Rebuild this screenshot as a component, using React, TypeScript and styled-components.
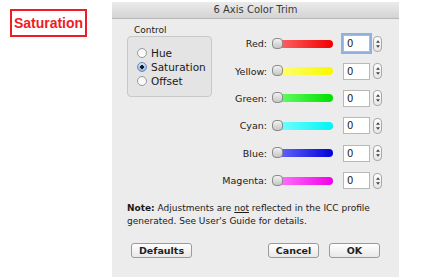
import React, { useState } from 'react';
import styled, { createGlobalStyle } from 'styled-components';

const GlobalStyle = createGlobalStyle`
  html, body {
    margin: 0;
    padding: 0;
    background: #ffffff;
  }
  body {
    font-family: "DejaVu Sans", "Noto Sans", sans-serif;
    font-size: 10px;
    color: #1a1a1a;
  }
`;

const channels = [
  { name: 'Red', from: '#ff7070', to: '#f00000' },
  { name: 'Yellow', from: '#ffff80', to: '#f8f800' },
  { name: 'Green', from: '#70ff70', to: '#00e000' },
  { name: 'Cyan', from: '#80ffff', to: '#00f4f4' },
  { name: 'Blue', from: '#7070ff', to: '#0000d8' },
  { name: 'Magenta', from: '#ff80ff', to: '#f000e8' },
];

const modes = ['Hue', 'Saturation', 'Offset'];

const App: React.FC = () => {
  const [mode, setMode] = useState('Saturation');

  return (
    <>
      <GlobalStyle />
      <Page>
        <ModeTag>Saturation</ModeTag>
        <Dialog>
          <TitleBar>6 Axis Color Trim</TitleBar>
          <Body>
            <Top>
              <ControlColumn>
                <GroupLabel>Control</GroupLabel>
                <GroupBox>
                  {modes.map(m => (
                    <RadioRow key={m} onClick={() => setMode(m)}>
                      <Radio $checked={mode === m} />
                      {m}
                    </RadioRow>
                  ))}
                </GroupBox>
              </ControlColumn>
              <Sliders>
                {channels.map((c, i) => (
                  <SliderRow key={c.name}>
                    <ChannelLabel>{c.name}:</ChannelLabel>
                    <Track $from={c.from} $to={c.to}>
                      <Thumb />
                    </Track>
                    <ValueBox $focused={i === 0}>0</ValueBox>
                    <Stepper>
                      <Arrow viewBox="0 0 6 4"><path d="M0 4 L3 0 L6 4 Z" /></Arrow>
                      <Arrow viewBox="0 0 6 4"><path d="M0 0 L3 4 L6 0 Z" /></Arrow>
                    </Stepper>
                  </SliderRow>
                ))}
              </Sliders>
            </Top>
            <Note>
              <NoteLine><b>Note:</b> Adjustments are <u>not</u> reflected in the ICC profile</NoteLine>
              <NoteLine>generated. See User's Guide for details.</NoteLine>
            </Note>
            <Buttons>
              <Button $width={61}>Defaults</Button>
              <Spacer />
              <Button $width={51}>Cancel</Button>
              <Button $width={51}>OK</Button>
            </Buttons>
          </Body>
        </Dialog>
      </Page>
    </>
  );
};

const Page = styled.div`
  display: flex;
  align-items: flex-start;
  width: 423px;
  height: 280px;
  padding: 2px 0 0 10px;
  box-sizing: border-box;
`;

const ModeTag = styled.div`
  margin-top: 7px;
  width: 77px;
  height: 28px;
  box-sizing: border-box;
  border: 2px solid #ee1c25;
  color: #ee1c25;
  font-family: "Liberation Sans", Arial, sans-serif;
  font-weight: bold;
  font-size: 14px;
  display: flex;
  align-items: center;
  justify-content: center;
`;

const Dialog = styled.div`
  margin-left: 25px;
  width: 287px;
  height: 275px;
  background: #ececec;
  display: flex;
  flex-direction: column;
`;

const TitleBar = styled.div`
  height: 16px;
  background: linear-gradient(#ebebeb, #d3d3d3);
  border-bottom: 1px solid #b8b8b8;
  text-align: center;
  line-height: 16px;
  font-size: 10px;
  color: #3a3a3a;
`;

const Body = styled.div`
  flex: 1;
  display: flex;
  flex-direction: column;
  padding: 0 0 0 15px;
`;

const Top = styled.div`
  display: flex;
`;

const ControlColumn = styled.div`
  display: flex;
  flex-direction: column;
  width: 85px;
  padding-top: 5px;
`;

const GroupLabel = styled.div`
  font-size: 9px;
  padding-left: 7px;
  height: 12px;
  line-height: 12px;
`;

const GroupBox = styled.div`
  height: 61px;
  box-sizing: border-box;
  border: 1px solid #c8c8c8;
  border-radius: 4px;
  background: #e4e4e4;
  padding: 9px 0 0 9px;
  display: flex;
  flex-direction: column;
`;

const RadioRow = styled.div`
  display: flex;
  align-items: center;
  gap: 4px;
  height: 14px;
  font-size: 10.5px;
  cursor: default;
`;

const Radio = styled.span<{ $checked: boolean }>`
  width: 10px;
  height: 10px;
  border-radius: 50%;
  box-sizing: border-box;
  border: 1px solid ${p => (p.$checked ? '#6a8ab8' : '#9a9a9a')};
  background: ${p =>
    p.$checked
      ? 'radial-gradient(circle, #1a1a1a 0 1.6px, transparent 2px), linear-gradient(#cfe1f7, #8fb4e6)'
      : 'linear-gradient(#f4f4f4, #ffffff)'};
`;

const Sliders = styled.div`
  display: grid;
  grid-auto-rows: 27.4px;
  padding-top: 11px;
`;

const SliderRow = styled.div`
  display: grid;
  grid-template-columns: 61px 60px 27px 12px;
  align-items: center;
`;

const ChannelLabel = styled.div`
  text-align: right;
  padding-right: 6px;
  font-size: 9.5px;
  white-space: nowrap;
`;

const Track = styled.div<{ $from: string; $to: string }>`
  position: relative;
  height: 8px;
  border-radius: 4px;
  background: linear-gradient(to right, ${p => p.$from}, ${p => p.$to});
`;

const Thumb = styled.span`
  position: absolute;
  left: -1px;
  top: -2px;
  width: 11px;
  height: 11px;
  box-sizing: border-box;
  border-radius: 4px;
  border: 1px solid #8a8a8a;
  background: linear-gradient(#f2f2f2, #c6c6c6);
`;

const ValueBox = styled.div<{ $focused: boolean }>`
  margin-left: 10px;
  width: 27px;
  height: 17px;
  box-sizing: border-box;
  background: #ffffff;
  border: 1px solid #b8b8b8;
  padding-left: 3px;
  line-height: 15px;
  font-size: 10px;
  box-shadow: ${p => (p.$focused ? '0 0 0 2px #8fb0e0' : 'none')};
`;

const Stepper = styled.div`
  margin-left: 13px;
  width: 9px;
  height: 16px;
  box-sizing: border-box;
  border: 1px solid #a8a8a8;
  border-radius: 4px;
  background: linear-gradient(#ffffff, #e6e6e6);
  display: flex;
  flex-direction: column;
  align-items: center;
  justify-content: center;
  gap: 2px;
`;

const Arrow = styled.svg`
  width: 4px;
  height: 3px;
  fill: #444;
`;

const Note = styled.div`
  margin-top: 8px;
  display: flex;
  flex-direction: column;
  font-size: 9px;
`;

const NoteLine = styled.div`
  height: 13px;
  line-height: 13px;
  white-space: nowrap;
`;

const Buttons = styled.div`
  display: flex;
  align-items: center;
  gap: 10px;
  margin-top: 15px;
  padding: 0 19px 0 4px;
`;

const Spacer = styled.div`
  flex: 1;
`;

const Button = styled.button<{ $width: number }>`
  width: ${p => p.$width}px;
  height: 15px;
  padding: 0;
  border: 1px solid #9a9a9a;
  border-radius: 3px;
  background: linear-gradient(#ffffff, #e8e8e8);
  font-family: inherit;
  font-size: 9.5px;
  font-weight: bold;
  color: #222;
  line-height: 13px;
`;

export default App;
